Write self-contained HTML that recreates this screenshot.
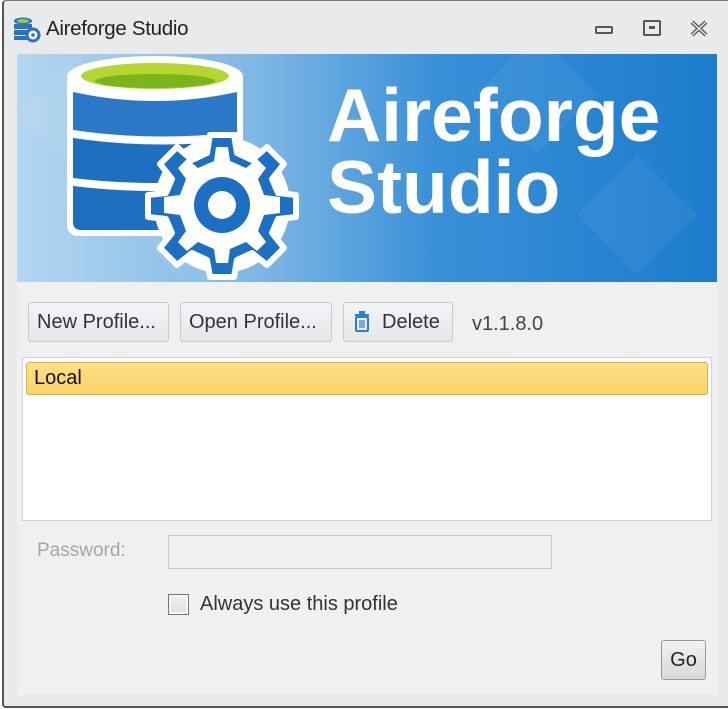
<!DOCTYPE html>
<html><head><meta charset="utf-8"><style>
*{box-sizing:border-box;margin:0;padding:0}
body{width:728px;height:709px;background:#fff;font-family:"Liberation Sans",sans-serif;position:relative;overflow:hidden}
.win{position:absolute;left:2px;top:0;width:726px;height:708px;background:#e9eaeb;border-left:2px solid #555;border-bottom:2px solid #555;border-top:1px solid #777;border-radius:4px 0 0 4px}
.title{position:absolute;left:46px;top:17px;font-size:20.5px;color:#222;letter-spacing:-0.3px}
.panel{position:absolute;left:17px;top:54px;width:700px;height:641px;background:#f0f0f0}
.banner{position:absolute;left:17px;top:54px;width:700px;height:228px;background:linear-gradient(90deg,#b4d6f0 0%,#7db6e4 35%,#3990d8 60%,#1c7ccd 100%);overflow:hidden}
.btext{position:absolute;left:310px;color:#fff;font-weight:bold;font-size:75px;line-height:74px}
.btn{position:absolute;top:302px;height:40px;background:linear-gradient(#f4f5f7,#e4e6ea);border:1px solid #c4c7cc;border-radius:3px;font-size:20px;color:#333;line-height:38px;padding:0 8px;white-space:nowrap}
.abs{position:absolute}
</style></head><body>
<div class="win"></div>
<svg class="abs" style="left:12px;top:16px" width="30" height="28" viewBox="0 0 30 28">
<ellipse cx="11" cy="5" rx="9" ry="3.5" fill="#2a72c2"/><ellipse cx="11" cy="5" rx="6" ry="2" fill="#9acd32"/>
<rect x="2" y="8" width="18" height="5" fill="#2a72c2"/><rect x="2" y="14" width="18" height="5" fill="#2a72c2"/><rect x="2" y="20" width="14" height="4" fill="#2a72c2"/>
<circle cx="21" cy="19" r="6" fill="#fff" stroke="#2a72c2" stroke-width="3"/><circle cx="21" cy="19" r="1.8" fill="#2a72c2"/></svg>
<div class="title">Aireforge Studio</div>
<svg class="abs" style="left:590px;top:16px" width="130" height="26">
<rect x="6" y="11" width="16" height="6" rx="1" fill="none" stroke="#555" stroke-width="2"/>
<rect x="54" y="5" width="16" height="14" rx="1" fill="none" stroke="#555" stroke-width="2"/><rect x="59" y="10" width="6" height="3" fill="#555"/>
<path d="M102 6 L116 19 M116 6 L102 19" stroke="#555" stroke-width="4"/><path d="M102 6 L116 19 M116 6 L102 19" stroke="#e9eaeb" stroke-width="1.5"/>
</svg>
<div class="panel"></div>
<div class="banner">
<svg class="abs" style="left:0;top:0" width="700" height="228">
<g opacity="0.05" fill="#fff"><path d="M0 60 L60 0 L120 60 L60 120Z M120 180 L180 120 L240 180 L180 240Z M460 40 L520 -20 L580 40 L520 100Z M560 160 L620 100 L680 160 L620 220Z"/></g>
<path d="M50 22 L50 170 Q50 182 62 182 L214 182 Q226 182 226 170 L226 22Z" fill="#fff"/>
<ellipse cx="138" cy="22" rx="88" ry="20" fill="#fff"/>
<ellipse cx="138" cy="22" rx="74" ry="13" fill="#b6d531"/>
<ellipse cx="138" cy="27" rx="60" ry="7" fill="#7ab51d"/>
<path d="M56 38 Q138 56 220 38 L220 78 Q138 88 56 76Z" fill="#2a78c7"/>
<path d="M56 84 Q138 96 220 86 L220 124 Q138 134 56 124Z" fill="#1f6fc0"/>
<path d="M56 132 Q138 142 220 132 L220 168 Q220 176 210 176 L64 176 Q56 176 56 168Z" fill="#1f6fc0"/>
<g transform="translate(205,151)">
<circle r="68" fill="#fff"/>
<path d="M-12 -70 L12 -70 L15 -52 L30 -45 L45 -58 L62 -41 L50 -26 L56 -12 L74 -10 L74 12 L56 14 L50 28 L62 43 L45 60 L30 48 L15 55 L12 72 L-12 72 L-15 55 L-30 48 L-45 60 L-62 43 L-50 28 L-56 14 L-74 12 L-74 -10 L-56 -12 L-50 -26 L-62 -41 L-45 -58 L-30 -45 L-15 -52Z" fill="#1c6fc2" stroke="#fff" stroke-width="6" stroke-linejoin="round"/>
<path d="M-6 -58 L6 -58 L8 -44 L24 -37 L35 -46 L44 -37 L36 -26 L42 -10 L58 -8 L58 8 L42 10 L36 26 L44 37 L35 46 L24 37 L8 44 L6 58 L-6 58 L-8 44 L-24 37 L-35 46 L-44 37 L-36 26 L-42 10 L-58 8 L-58 -8 L-42 -10 L-36 -26 L-44 -37 L-35 -46 L-24 -37 L-8 -44Z" fill="#fff"/>
<circle r="28" fill="#1c6fc2"/><circle r="14" fill="#fff"/>
</g>
</svg>
<div class="btext" style="top:24px">Aireforge</div>
<div class="btext" style="top:96px">Studio</div>
</div>
<div class="btn" style="left:28px;width:141px">New Profile...</div>
<div class="btn" style="left:180px;width:152px">Open Profile...</div>
<div class="btn" style="left:343px;width:110px;padding-left:38px">Delete</div>
<svg class="abs" style="left:353px;top:311px" width="18" height="22"><rect x="2" y="3" width="14" height="2" fill="#2a7fd4"/><rect x="6" y="0" width="6" height="3" fill="#2a7fd4"/><rect x="3" y="6" width="12" height="14" rx="1" fill="none" stroke="#2a7fd4" stroke-width="2"/><path d="M7 9v8M9 9v8M11 9v8" stroke="#2a7fd4" stroke-width="1.2"/></svg>
<div class="abs" style="left:472px;top:313px;font-size:20px;color:#444">v1.1.8.0</div>
<div class="abs" style="left:22px;top:357px;width:690px;height:164px;background:#fff;border:1px solid #d2d2d2"></div>
<div class="abs" style="left:26px;top:362px;width:682px;height:33px;background:linear-gradient(#fde08a,#fcd466);border:1px solid #dcae45;border-radius:3px;font-size:20px;color:#111;padding:4px 0 0 7px">Local</div>
<div class="abs" style="left:37px;top:540px;font-size:19px;color:#a6a6a6">Password:</div>
<div class="abs" style="left:168px;top:535px;width:384px;height:34px;border:1px solid #c8c8c8;background:#f0f0f0"></div>
<div class="abs" style="left:168px;top:594px;width:21px;height:21px;border:1px solid #777;background:linear-gradient(#f0f0f0,#e0e0e0);box-shadow:inset 0 0 0 2px #f6f6f6"></div>
<div class="abs" style="left:200px;top:593px;font-size:20px;color:#333">Always use this profile</div>
<div class="abs" style="left:661px;top:640px;width:45px;height:40px;border:1px solid #999;border-radius:3px;background:linear-gradient(#f2f2f2,#d8d8d8);font-size:20px;color:#222;text-align:center;line-height:38px">Go</div>
</body></html>
